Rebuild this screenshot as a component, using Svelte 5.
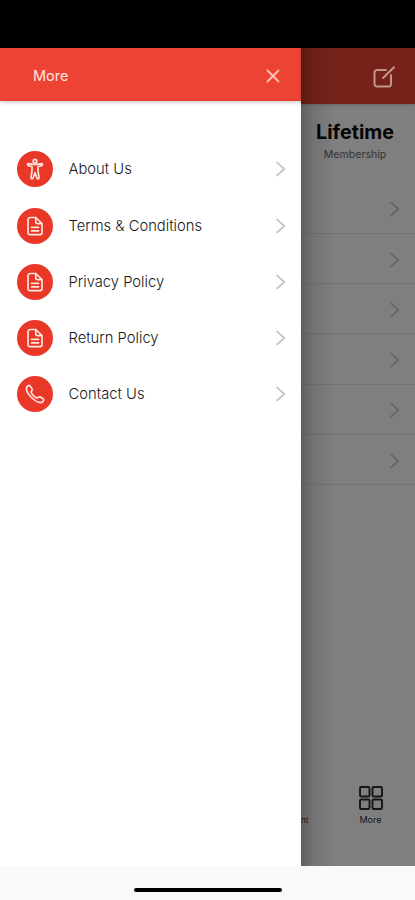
<script>
  const items = [
    { label: 'About Us', icon: 'body' },
    { label: 'Terms & Conditions', icon: 'doc' },
    { label: 'Privacy Policy', icon: 'doc' },
    { label: 'Return Policy', icon: 'doc' },
    { label: 'Contact Us', icon: 'call' },
  ];
  const rows = [1, 2, 3, 4, 5, 6];
</script>

<div class="screen">
  <div class="status"></div>
  <div class="body">
    <aside class="drawer">
      <header class="head">
        <span class="title">More</span>
        <svg class="close" viewBox="0 0 14 14"><path d="M1.5 1.5L12.5 12.5M12.5 1.5L1.5 12.5" /></svg>
      </header>
      <nav class="menu">
        {#each items as item}
          <div class="item">
            <span class="disc">
              {#if item.icon === 'body'}
                <svg viewBox="0 0 22 22">
                  <circle cx="11" cy="3.200" r="1.800" />
                  <path d="M4.500 5.600C3.200 5.500 3.200 7.500 4.500 7.700L8 8.500V12.500L7 19.600C6.900 21.100 8.700 21.300 9.100 20L11 14.500L12.900 20C13.300 21.300 15.100 21.100 15 19.600L14 12.500V8.500L17.500 7.700C18.800 7.500 18.800 5.500 17.500 5.600L13 6.300H9Z" />
                </svg>
              {:else if item.icon === 'doc'}
                <svg viewBox="0 0 22 22">
                  <path d="M11.800 2.500H6.300A2.300 2.300 0 0 0 4 4.800V17.400A2.300 2.300 0 0 0 6.300 19.700H15.700A2.300 2.300 0 0 0 18 17.400V8.700L11.800 2.500V7.200A1.500 1.500 0 0 0 13.300 8.700H18M7.500 12.300H14.500M7.500 15.900H14.500" />
                </svg>
              {:else}
                <svg viewBox="0 0 22 22">
                  <path d="M19.400 16.200C18.500 15.300 17 14.300 16 13.900C14.700 13.400 14.200 14.700 13.300 14.800C12.300 14.900 10.500 13.700 9.300 12.500C8.200 11.400 7.100 9.800 7.200 8.900C7.300 8 8.600 7.500 8.200 6.200C7.800 5 6.600 3.500 5.700 2.700C4.700 1.900 2.800 3.500 2.500 4.900C2.100 7.300 4.400 11.400 7.500 14.500C10.600 17.500 14.600 19.900 17.100 19.600C18.600 19.300 20.400 17.200 19.400 16.200Z" />
                </svg>
              {/if}
            </span>
            <span class="label">{item.label}</span>
            <svg class="chev" viewBox="0 0 10 16"><path d="M1.200 1.600L8.200 8L1.200 14.400" /></svg>
          </div>
        {/each}
      </nav>
    </aside>

    <main class="page">
      <div class="bar">
        <svg class="edit" viewBox="0 0 24 24">
          <path d="M14 5H5A2.500 2.500 0 0 0 2.500 7.500V19A2.500 2.500 0 0 0 5 21.500H16.500A2.500 2.500 0 0 0 19 19V10M11 13L22 2.200" />
        </svg>
      </div>
      <div class="plan">
        <strong>Lifetime</strong>
        <small>Membership</small>
      </div>
      <div class="rows">
        {#each rows as row (row)}
          <div class="row">
            <svg class="chev" viewBox="0 0 10 16"><path d="M1.200 1.600L8.200 8L1.200 14.400" /></svg>
          </div>
        {/each}
      </div>
      <div class="tabs">
        <span class="cut">nt</span>
        <div class="tab">
          <svg viewBox="0 0 24 24">
            <rect x="1" y="1" width="9.500" height="9.500" rx="1.300" />
            <rect x="13.500" y="1" width="9.500" height="9.500" rx="1.300" />
            <rect x="1" y="13.500" width="9.500" height="9.500" rx="1.300" />
            <rect x="13.500" y="13.500" width="9.500" height="9.500" rx="1.300" />
          </svg>
          <span>More</span>
        </div>
      </div>
      <div class="shade"></div>
    </main>
  </div>
  <footer><i></i></footer>
</div>

<style>
  .screen {
    width: 415px;
    height: 900px;
    display: flex;
    flex-direction: column;
    overflow: hidden;
    font-family: Inter, "Liberation Sans", sans-serif;
    background: #f9f9f9;
  }
  svg {
    display: block;
    flex: none;
    fill: none;
    stroke: currentColor;
    stroke-linecap: round;
    stroke-linejoin: round;
  }
  .status { height: 48px; background: #000; flex: none; }
  .body { height: 818px; display: flex; flex: none; }
  .drawer { width: 301px; background: #fff; flex: none; }
  .head {
    height: 53px;
    box-sizing: border-box;
    padding: 2px 21px 0 33px;
    display: flex;
    align-items: center;
    justify-content: space-between;
    background: #ed4334;
    color: #ffe5df;
    box-shadow: 0 1px 4px rgba(0, 0, 0, 0.25);
  }
  .title { font-size: 14.500px; line-height: 20px; }
  .close { width: 14px; height: 14px; stroke-width: 1.800; color: #ffc5b9; }
  .menu { padding-top: 40.300px; }
  .item {
    height: 56.200px;
    display: flex;
    align-items: center;
    padding: 0 15px 0 16.500px;
  }
  .disc {
    width: 36px;
    height: 36px;
    border-radius: 50%;
    background: #e93728;
    color: #ffe3dc;
    display: flex;
    align-items: center;
    justify-content: center;
  }
  .disc svg { width: 22px; height: 22px; stroke-width: 1.700; }
  .label {
    flex: 1;
    margin-left: 16px;
    padding-top: 1px;
    line-height: 19px;
    font-size: 14.750px;
    font-weight: 300;
    color: #181818;
    white-space: nowrap;
  }
  .chev { width: 10px; height: 16px; stroke-width: 1.900; color: #c6c6c6; }
  .page {
    position: relative;
    flex: 1;
    min-width: 0;
    display: flex;
    flex-direction: column;
    background: #7f7f7f;
  }
  .bar {
    height: 56px;
    box-sizing: border-box;
    display: flex;
    justify-content: flex-end;
    padding: 17px 19px 0 0;
    background: #76221a;
    color: #c0958e;
    box-shadow: 0 1px 3px rgba(0, 0, 0, 0.2);
  }
  .edit { width: 24px; height: 24px; stroke-width: 2; }
  .plan {
    height: 79.600px;
    box-sizing: border-box;
    padding: 16px 0 0 14px;
    width: 94px;
    display: flex;
    flex-direction: column;
    align-items: center;
  }
  .plan strong { font-size: 19.700px; line-height: 24px; font-weight: 700; color: #050505; }
  .plan small { font-size: 10.600px; line-height: 14px; margin-top: 4px; color: #343434; }
  .rows { flex: 1; }
  .row {
    height: 50.300px;
    box-sizing: border-box;
    border-bottom: 1px solid #747474;
    display: flex;
    align-items: center;
    justify-content: flex-end;
    padding: 2px 15px 0 0;
  }
  .row .chev { color: #666; }
  .tabs {
    height: 91px;
    display: flex;
    justify-content: space-between;
    box-sizing: border-box;
    padding: 11px 32.500px 0 0;
    color: #161616;
    font-size: 9px;
    line-height: 12px;
  }
  .cut { margin-top: 28px; font-size: 8px; }
  .tab { display: flex; flex-direction: column; align-items: center; }
  .tab svg { width: 24px; height: 24px; stroke-width: 1.900; margin-bottom: 4px; }
  .shade {
    position: absolute;
    inset: 0 auto 0 0;
    width: 34px;
    background: linear-gradient(90deg, rgba(0, 0, 0, 0.25), rgba(0, 0, 0, 0.100) 35%, transparent);
  }
  footer { flex: 1; display: flex; justify-content: center; padding-top: 22px; }
  footer i { width: 148px; height: 4px; border-radius: 2px; background: #000; }
</style>
